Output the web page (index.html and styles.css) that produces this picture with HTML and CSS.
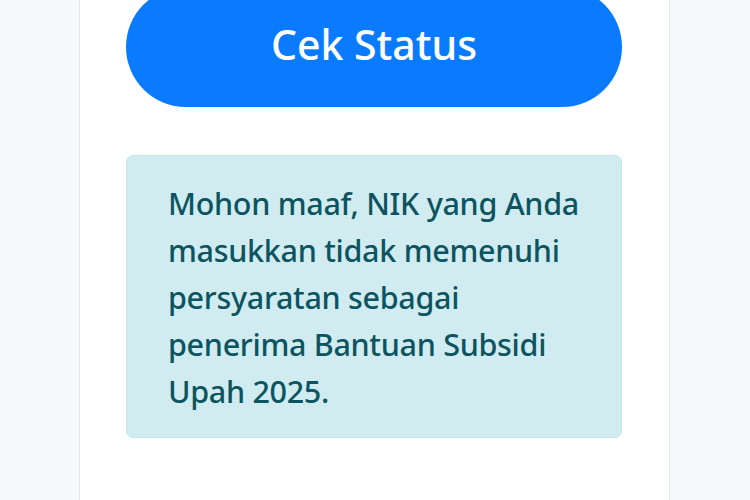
FILE: index.html
```html
<!DOCTYPE html>
<html lang="id">
<head>
<meta charset="utf-8">
<link rel="stylesheet" href="styles.css">
</head>
<body>
<div class="page">
  <div class="card">
    <button class="btn">Cek Status</button>
    <div class="alert">Mohon maaf, NIK yang Anda masukkan tidak memenuhi persyaratan sebagai penerima Bantuan Subsidi Upah 2025.</div>
  </div>
</div>
</body>
</html>
```
FILE: styles.css
```css
html, body {
  margin: 0;
  padding: 0;
  height: 100%;
  background: #f7f8fa;
  overflow: hidden;
}
.page {
  display: flex;
  justify-content: flex-start;
  padding-left: 79px;
  height: 100%;
}
.card {
  width: 591px;
  background: #ffffff;
  border-left: 1px solid #e4e6ea;
  border-right: 1px solid #e4e6ea;
  padding: 0 47px 0 46px;
  box-sizing: border-box;
  margin-top: -13px;
  display: flex;
  flex-direction: column;
  gap: 48px;
  height: calc(100% + 13px);
}
.btn {
  height: 120px;
  width: 100%;
  border: none;
  border-radius: 60px;
  background: #0a7bff;
  color: #ffffff;
  font-family: "Noto Sans", "Open Sans", sans-serif;
  font-size: 41px;
  font-weight: 500;
  padding: 0 0 6px 0;
}
.alert {
  background: #d1ecf1;
  border: 1px solid #c5e5eb;
  border-radius: 7px;
  color: #0c5460;
  font-family: "Noto Sans", "Open Sans", sans-serif;
  font-size: 30.5px;
  font-weight: 500;
  letter-spacing: -0.3px;
  line-height: 47px;
  padding: 24px 24px 22px 41px;
}
```
